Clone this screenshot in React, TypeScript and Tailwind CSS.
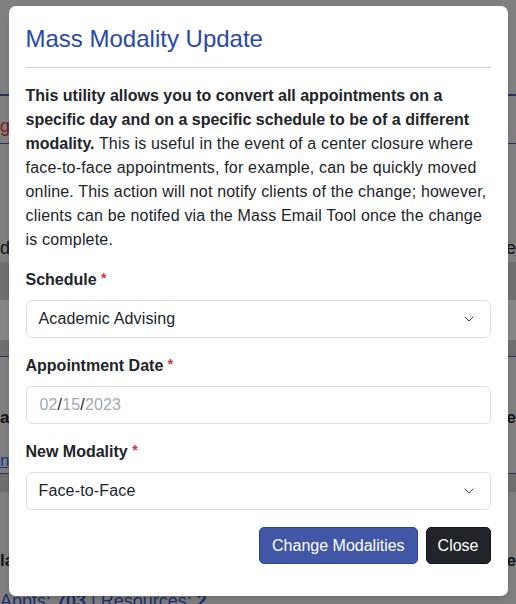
import { ChevronDown } from 'lucide-react'

function Required() {
  return <span className="text-[#d6333f] text-[14px] font-bold relative -top-[2px]">*</span>
}

function SelectBox({ value }: { value: string }) {
  return (
    <div className="h-[38px] w-full flex items-center justify-between pl-[12px] pr-[13px] bg-white border border-[#dcdfe4] rounded-[6px] text-[16px] text-[#212529] tracking-[0.15px]">
      <span>{value}</span>
      <ChevronDown size={16} strokeWidth={1.5} className="text-[#343a40]" />
    </div>
  )
}

function FieldLabel({ children }: { children: React.ReactNode }) {
  return (
    <div className="text-[16px] leading-[24px] font-bold text-[#212529] mb-2">
      {children} <Required />
    </div>
  )
}

export default function App() {
  return (
    <div className="relative w-[516px] h-[604px] overflow-hidden bg-[#7f7f7f]" style={{ fontFamily: '"Liberation Sans", Arial, sans-serif' }}>
      {/* dimmed page behind the modal */}
      <div className="flex flex-col text-[#121212]">
        <div className="h-[94px]" />
        <div className="h-[2px] bg-[#283063]" />
        <div className="h-[47px] flex items-center pt-[14px] text-[#7d1c22] text-[18px]">g</div>
        <div className="h-[1px] bg-[#283063]" />
        <div className="h-[118px] flex items-end justify-between text-[18px]">
          <span>d</span>
          <span>e</span>
        </div>
        <div className="h-[38px] bg-[#6e6e6e]" />
        <div className="h-[40px] bg-[#868686]" />
        <div className="h-[16px] bg-[#6e6e6e]" />
        <div className="h-[1px] bg-[#283063]" />
        <div className="h-[73px] flex items-end justify-between text-[17px] font-bold">
          <span>a'</span>
          <span>ce</span>
        </div>
        <div className="h-[43px] flex items-end text-[#1e3a8a] underline text-[17px]">n</div>
        <div className="h-[1px] bg-[#283063]" />
        <div className="h-[18px] bg-[#6e6e6e]" />
        <div className="h-[83px] flex items-end justify-between pb-[2px] text-[17px] font-bold">
          <span>la</span>
          <span>ce</span>
        </div>
        <div className="mt-[13px] text-[18px] text-[#1f2f6e]">
          Appts: <span className="font-bold">703</span> | Resources: <span className="font-bold">2</span>
        </div>
      </div>

      {/* modal */}
      <div className="absolute inset-0 flex justify-center pt-[6px]">
        <div className="w-[499px] h-[590px] bg-white rounded-[7px] shadow-md px-[17px] pt-[18px] pb-[32px] flex flex-col text-[#212529]">
          <h5 className="text-[24px] leading-[29px] text-[#2a48a6]">Mass Modality Update</h5>
          <hr className="mt-[14px] mb-[16px] border-[#cfd3d8]" />

          <p className="text-[16px] leading-[24px] mb-4 tracking-[0.18px]">
            <strong className="tracking-normal">This utility allows you to convert all appointments on a specific day and on a specific schedule to be of a different modality.</strong>{' '}
            This is useful in the event of a center closure where face-to-face appointments, for example, can be quickly moved online. This action will not notify clients of the change; however, clients can be notifed via the Mass Email Tool once the change is complete.
          </p>

          <FieldLabel>Schedule</FieldLabel>
          <SelectBox value="Academic Advising" />

          <div className="mt-4">
            <FieldLabel>Appointment Date</FieldLabel>
            <div className="h-[38px] w-full flex items-center px-[13px] bg-white border border-[#dcdfe4] rounded-[6px] text-[16px] text-[#a3aab5] tracking-[0.15px]">
              02<span className="text-[#212529]">/</span>15<span className="text-[#212529]">/</span>2023
            </div>
          </div>

          <div className="mt-4">
            <FieldLabel>New Modality</FieldLabel>
            <SelectBox value="Face-to-Face" />
          </div>

          <div className="flex justify-end gap-[8px] mt-[17px]">
            <button className="h-[37px] px-[12px] rounded-[5px] bg-[#4157a6] border border-[#2f4494] text-white text-[16px]">
              Change Modalities
            </button>
            <button className="h-[37px] px-[11px] rounded-[5px] bg-[#212529] border border-[#111418] text-white text-[16px]">
              Close
            </button>
          </div>
        </div>
      </div>
    </div>
  )
}
